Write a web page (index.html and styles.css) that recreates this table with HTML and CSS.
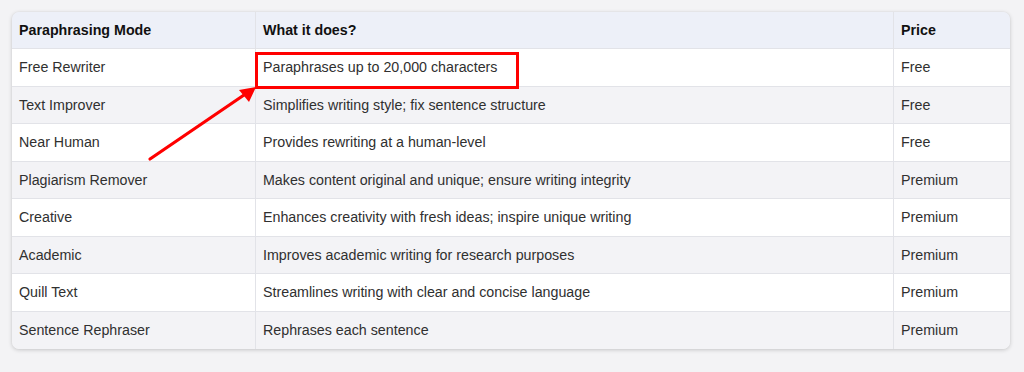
FILE: index.html
```html
<!DOCTYPE html>
<html>
<head>
<meta charset="utf-8">
<link rel="stylesheet" href="styles.css">
</head>
<body>
<div class="page">
  <div class="frame">
    <table class="modes">
      <colgroup><col class="c1"><col class="c2"><col class="c3"></colgroup>
      <thead>
        <tr><th>Paraphrasing Mode</th><th>What it does?</th><th>Price</th></tr>
      </thead>
      <tbody>
        <tr><td>Free Rewriter</td><td>Paraphrases up to 20,000 characters</td><td>Free</td></tr>
        <tr><td>Text Improver</td><td>Simplifies writing style; fix sentence structure</td><td>Free</td></tr>
        <tr><td>Near Human</td><td>Provides rewriting at a human-level</td><td>Free</td></tr>
        <tr><td>Plagiarism Remover</td><td>Makes content original and unique; ensure writing integrity</td><td>Premium</td></tr>
        <tr><td>Creative</td><td>Enhances creativity with fresh ideas; inspire unique writing</td><td>Premium</td></tr>
        <tr><td>Academic</td><td>Improves academic writing for research purposes</td><td>Premium</td></tr>
        <tr><td>Quill Text</td><td>Streamlines writing with clear and concise language</td><td>Premium</td></tr>
        <tr><td>Sentence Rephraser</td><td>Rephrases each sentence</td><td>Premium</td></tr>
      </tbody>
    </table>
    <div class="highlight"></div>
    <svg class="arrow" width="1024" height="372" viewBox="0 0 1024 372">
      <line x1="150" y1="159" x2="244" y2="95" stroke="#ff0000" stroke-width="3.2" stroke-linecap="round"/>
      <polygon points="256,87 239,90 249,102" fill="#ff0000"/>
    </svg>
  </div>
</div>
</body>
</html>
```
FILE: styles.css
```css
html, body {
  margin: 0;
  padding: 0;
  background: #f3f3f5;
}
.page {
  width: 1024px;
  height: 372px;
  padding: 12px 14px 0 12px;
  box-sizing: border-box;
}
.frame {
  position: relative;
  width: 998px;
}
.modes {
  width: 998px;
  border-collapse: separate;
  border-spacing: 0;
  table-layout: fixed;
  border-radius: 7px;
  overflow: hidden;
  box-shadow: 0 1px 4px rgba(0,0,0,0.18), 0 0 1px rgba(0,0,0,0.12);
  font-family: "Liberation Sans", Arial, sans-serif;
  font-size: 14.25px;
  color: #303030;
}
.c1 { width: 244px; }
.c2 { width: 638px; }
.c3 { width: 116px; }
.modes th, .modes td {
  text-align: left;
  padding: 0 0 0 7px;
  border-bottom: 1px solid #e2e3e8;
  border-right: 1px solid #e2e3e8;
  box-sizing: border-box;
  height: 37.5px;
  white-space: nowrap;
}
.modes th:last-child, .modes td:last-child { border-right: none; }
.modes tbody tr:last-child td { border-bottom: none; }
.modes th {
  background: #edf0f8;
  color: #111;
  font-weight: bold;
  height: 37px;
}
.modes tbody tr:nth-child(odd) td { background: #ffffff; }
.modes tbody tr:nth-child(even) td { background: #f3f3f6; }
.highlight {
  position: absolute;
  left: 243px;
  top: 40px;
  width: 264px;
  height: 37px;
  border: 3px solid #ff0000;
  box-sizing: border-box;
}
.arrow {
  position: absolute;
  left: -12px;
  top: -12px;
  pointer-events: none;
}
```
